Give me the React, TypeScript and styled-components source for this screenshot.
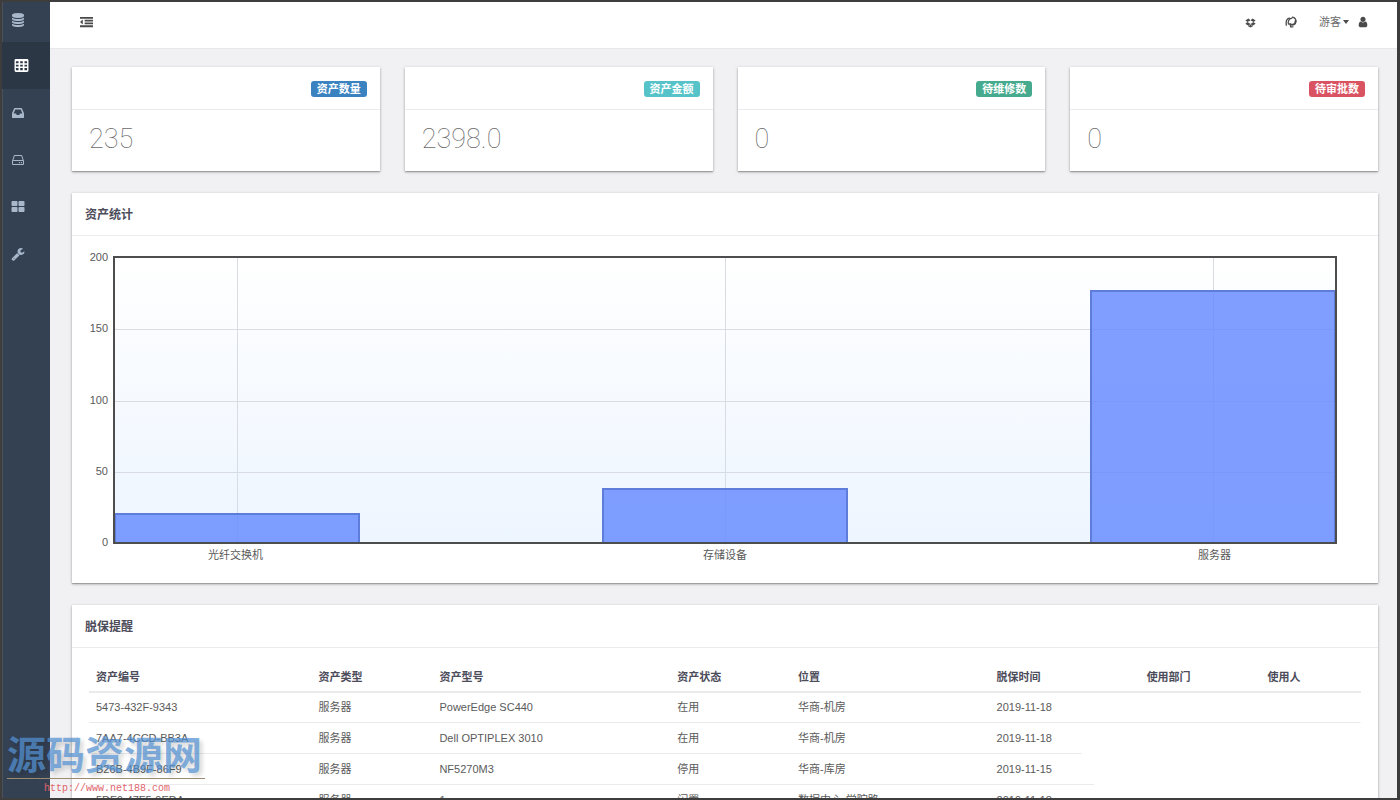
import React from 'react';
import styled, { createGlobalStyle } from 'styled-components';

const GlobalStyle = createGlobalStyle`
  *, *::before, *::after { box-sizing: border-box; }
  body {
    margin: 0;
    color: #5a5a5a;
    background: #f1f1f3;
    font: 11px/16px "Liberation Sans", "Noto Sans CJK SC", sans-serif;
  }
`;

const Frame = styled.div`
  position: relative;
  display: flex;
  height: 100vh;
  overflow: hidden;
  border: 2px solid #3d3d3d;
  border-right-width: 3px;
`;

const Sidebar = styled.nav`
  flex: none;
  width: 48px;
  background: #344153;
  box-shadow: inset 1px 0 #4b5157;
`;

const SideLink = styled.a<{ $active?: boolean; $logo?: boolean }>`
  display: flex;
  align-items: center;
  height: ${p => (p.$logo ? 40 : 47)}px;
  padding: 0 0 ${p => (p.$logo ? 4 : 0)}px ${p => (p.$active ? 12 : 9)}px;
  color: ${p => (p.$active ? '#ffffff' : '#a9b7cb')};
  background: ${p => (p.$active ? '#2b3744' : 'transparent')};
`;

const Glyph = styled.svg<{ $size: number }>`
  display: block;
  width: ${p => p.$size}px;
  height: ${p => p.$size}px;
  fill: currentColor;
`;

const Page = styled.div`
  flex: 1;
  min-width: 0;
`;

const TopBar = styled.header`
  display: flex;
  align-items: center;
  justify-content: space-between;
  height: 47px;
  padding: 0 28px 6px 30px;
  background: #fff;
  border-bottom: 1px solid #e7e8ea;
`;

const TopActions = styled.div<{ $gap: number }>`
  display: flex;
  align-items: center;
  gap: ${p => p.$gap}px;
`;

const PlainButton = styled.button`
  display: flex;
  align-items: center;
  padding: 0;
  border: 0;
  background: none;
  color: #4a4a4a;
  font: inherit;
`;

const UserButton = styled(PlainButton)`
  color: #6a6a6a;
  gap: 2px;
  svg { margin-left: 6px; color: #4a4a4a; }
`;

const Caret = styled.span`
  border: 3px solid transparent;
  border-top: 4px solid #4a4a4a;
  border-bottom: 0;
`;

const Content = styled.main`
  display: grid;
  gap: 22px;
  padding: 18px 19px 0 22px;
`;

const Stats = styled.div`
  display: grid;
  grid-template-columns: repeat(4, 1fr);
  gap: 25px;
`;

const Card = styled.section`
  min-width: 0;
  background: #fff;
  box-shadow: 0 1px 3px rgba(0, 0, 0, 0.28), 0 1px 1px rgba(0, 0, 0, 0.2);
`;

const CardHead = styled.div`
  display: flex;
  align-items: center;
  height: 43px;
  padding: 2px 13px 0;
  border-bottom: 1px solid #ebecee;
`;

const Badge = styled.span<{ $color: string }>`
  margin-left: auto;
  padding: 0 6px;
  border-radius: 3px;
  background: ${p => p.$color};
  color: #fff;
  font-weight: 700;
`;

const Figure = styled.p`
  margin: 0;
  padding: 13px 17px 16px;
  color: #6a6a6a;
  font: 100 27px/32px Roboto, sans-serif;
`;

const Title = styled.h2`
  margin: 0;
  color: #4c4c5a;
  font-size: 12px;
  font-weight: 700;
`;

const Chart = styled.div`
  display: grid;
  grid-template-columns: 23px 1fr;
  column-gap: 5px;
  padding: 13px 41px 20px 13px;
`;

const YAxis = styled.div`
  display: flex;
  flex-direction: column;
  justify-content: space-between;
  align-items: flex-end;
  height: 301px;
`;

const PlotColumn = styled.div`
  min-width: 0;
  padding-top: 7px;
`;

const Plot = styled.svg`
  display: block;
  width: 100%;
  height: 288px;
  border: 2px solid #4d4d4d;
  overflow: hidden;
`;

const XAxis = styled.div`
  display: flex;
  justify-content: space-between;
  padding-top: 3px;
  span { width: 20%; text-align: center; }
`;

const TableWrap = styled.div`
  padding: 13px 17px;
`;

const Table = styled.table`
  width: 100%;
  table-layout: fixed;
  border-collapse: collapse;
  th, td { height: 31px; text-align: left; white-space: nowrap; }
  th { padding: 2px 7px 0; color: #4c4c5a; font-weight: 700; }
  td { padding: 0 7px 2px; }
  thead tr { border-bottom: 2px solid #e9eaeb; }
`;

const Row = styled.tr<{ $rule: string }>`
  background: linear-gradient(#e9eaec, #e9eaec) left bottom / ${p => p.$rule} 1px no-repeat;
`;

const Watermark = styled.div`
  position: absolute;
  left: 5px;
  bottom: 0;
  width: 198px;
  pointer-events: none;
`;

const MarkName = styled.div`
  padding-bottom: 6px;
  border-bottom: 1px solid #9c8a72;
  color: rgba(84, 146, 212, 0.72);
  font: 700 39px/40px "Noto Sans CJK SC", sans-serif;
  text-shadow: 3px 3px 4px rgba(0, 0, 0, 0.16);
  white-space: nowrap;
`;

const MarkUrl = styled.div`
  padding: 1px 0 0 37px;
  color: #e0646c;
  font: 10px/18px "Liberation Mono", monospace;
`;

const icons = {
  database:
    'M896 768q237 0 443-43t325-127v170q0 69-103 128t-280 93.5-385 34.5-385-34.5-280-93.5-103-128v-170q119 84 325 127t443 43zm0 768q237 0 443-43t325-127v170q0 69-103 128t-280 93.5-385 34.5-385-34.5-280-93.5-103-128v-170q119 84 325 127t443 43zm0-384q237 0 443-43t325-127v170q0 69-103 128t-280 93.5-385 34.5-385-34.5-280-93.5-103-128v-170q119 84 325 127t443 43zm0-1152q208 0 385 34.5t280 93.5 103 128v128q0 69-103 128t-280 93.5-385 34.5-385-34.5-280-93.5-103-128v-128q0-69 103-128t280-93.5 385-34.5z',
  table:
    'M224 128h1344q160 0 160 160v1216q0 160-160 160h-1344q-160 0-160-160v-1216q0-160 160-160zM230 400v230h310v-230zM740 400v230h310v-230zM1250 400v230h310v-230zM230 800v230h310v-230zM740 800v230h310v-230zM1250 800v230h310v-230zM230 1200v260h310v-260zM740 1200v260h310v-260zM1250 1200v260h310v-260z',
  inbox:
    'M1151 960h316q-1-3-2.5-8t-2.5-8l-212-496h-708l-212 496q-1 2-2.5 8t-2.5 8h316l95 192h320zm513 30v482q0 26-19 45t-45 19h-1408q-26 0-45-19t-19-45v-482q0-62 25-123l238-552q10-25 36.5-42t52.5-17h832q26 0 52.5 17t36.5 42l238 552q25 61 25 123z',
  drive:
    'M1168 1216q0 33-23.5 56.5t-56.5 23.5-56.5-23.5-23.5-56.5 23.5-56.5 56.5-23.5 56.5 23.5 23.5 56.5zm256 0q0 33-23.5 56.5t-56.5 23.5-56.5-23.5-23.5-56.5 23.5-56.5 56.5-23.5 56.5 23.5 23.5 56.5zm112 160v-320q0-13-9.5-22.5t-22.5-9.5h-1216q-13 0-22.5 9.5t-9.5 22.5v320q0 13 9.5 22.5t22.5 9.5h1216q13 0 22.5-9.5t9.5-22.5zm-1230-480h1180l-157-482q-4-13-16-21.5t-26-8.5h-782q-14 0-26 8.5t-16 21.5zm1358 160v320q0 66-47 113t-113 47h-1216q-66 0-113-47t-47-113v-320q0-25 16-75l197-606q17-53 63-86t101-33h782q55 0 101 33t63 86l197 606q16 50 16 75z',
  blocks:
    'M832 1024v384q0 52-38 90t-90 38h-512q-52 0-90-38t-38-90v-384q0-52 38-90t90-38h512q52 0 90 38t38 90zm0-768v384q0 52-38 90t-90 38h-512q-52 0-90-38t-38-90v-384q0-52 38-90t90-38h512q52 0 90 38t38 90zm896 768v384q0 52-38 90t-90 38h-512q-52 0-90-38t-38-90v-384q0-52 38-90t90-38h512q52 0 90 38t38 90zm0-768v384q0 52-38 90t-90 38h-512q-52 0-90-38t-38-90v-384q0-52 38-90t90-38h512q52 0 90 38t38 90z',
  wrench:
    'M448 1472q0-26-19-45t-45-19-45 19-19 45 19 45 45 19 45-19 19-45zm644-420l-682 682q-37 37-90 37-52 0-91-37l-106-108q-38-36-38-90 0-53 38-91l681-681q39 98 114.5 173.5t173.5 114.5zm634-435q0 39-23 106-47 134-164.5 217.5t-258.5 83.5q-185 0-316.5-131.5t-131.5-316.5 131.5-316.5 316.5-131.5q58 0 121.5 16.5t107.5 46.5q16 11 16 28t-16 28l-293 169v224l193 107q5-3 79-48.5t135.5-81 70.5-35.5q15 0 23.5 10t8.5 25z',
  outdent:
    'M384 544v576q0 13-9.5 22.5t-22.5 9.5q-14 0-23-9l-288-288q-9-9-9-23t9-23l288-288q9-9 23-9 13 0 22.5 9.5t9.5 22.5zM0 1280h1792v256h-1792zM640 896h1152v256h-1152zM640 512h1152v256h-1152zM0 128h1792v256h-1792z',
  dropbox:
    'M402 829l494 305-342 285-490-320zm888 555v108l-394 236v2l-1-1-1 1v-2l-393-236v-108l118 77 275-228v-2l1 1 1-1v2l276 228zm-736-1145l342 285-494 305-338-270zm836 590l338 270-489 320-343-285zm-151-590l489 319-338 271-494-305z',
  user:
    'M1536 1399q0 109-62.5 187t-150.5 78h-854q-88 0-150.5-78t-62.5-187q0-85 8.5-160.5t31.5-152 58.5-131 94-89 134.5-34.5q131 128 313 128t313-128q76 0 134.5 34.5t94 89 58.5 131 31.5 152 8.5 160.5zm-256-887q0 159-112.5 271.5t-271.5 112.5-271.5-112.5-112.5-271.5 112.5-271.5 271.5-112.5 271.5 112.5 112.5 271.5z',
};

function Icon({ name, size }: { name: keyof typeof icons; size: number }) {
  return (
    <Glyph $size={size} viewBox="0 0 1792 1792" aria-hidden="true">
      <path fillRule="evenodd" d={icons[name]} />
    </Glyph>
  );
}

function SwirlIcon() {
  return (
    <Glyph $size={12} viewBox="0 0 12 12" aria-hidden="true">
      <g fill="none" stroke="currentColor" strokeLinecap="round">
        <path d="M4.6 2.2C2 2.6 0.7 5 1.3 9.2" strokeWidth="1.3" />
        <path d="M3.4 8.2C2.8 5 4 2.6 7 2.2" strokeWidth="1.2" />
        <path d="M7.4 1.2C10 1.8 11.2 3.6 10.8 6" strokeWidth="1.2" />
        <path d="M10.6 5C10.6 8.6 7.8 9.6 5 8" strokeWidth="2" />
        <path d="M5.2 8.4L5.6 10.8H8" strokeWidth="1.2" />
      </g>
    </Glyph>
  );
}

const stats = [
  { label: '资产数量', value: '235', color: '#3a83c0' },
  { label: '资产金额', value: '2398.0', color: '#55c3c8' },
  { label: '待维修数', value: '0', color: '#46ab8e' },
  { label: '待审批数', value: '0', color: '#d95362' },
];

const bars = [
  { label: '光纤交换机', value: 20 },
  { label: '存储设备', value: 38 },
  { label: '服务器', value: 177 },
];

const ticks = [200, 150, 100, 50, 0];
const PLOT_HEIGHT = 285;

const columns = [
  { name: '资产编号', width: '17.5%' },
  { name: '资产类型', width: '9.5%' },
  { name: '资产型号', width: '18.7%' },
  { name: '资产状态', width: '9.5%' },
  { name: '位置', width: '15.6%' },
  { name: '脱保时间', width: '11.8%' },
  { name: '使用部门', width: '9.5%' },
  { name: '使用人', width: '7.9%' },
];

const assets = [
  { rule: '100%', cells: ['5473-432F-9343', '服务器', 'PowerEdge SC440', '在用', '华商-机房', '2019-11-18', '', ''] },
  { rule: '78%', cells: ['7AA7-4CCD-BB3A', '服务器', 'Dell OPTIPLEX 3010', '在用', '华商-机房', '2019-11-18', '', ''] },
  { rule: '79%', cells: ['B26B-4B9F-86F9', '服务器', 'NF5270M3', '停用', '华商-库房', '2019-11-15', '', ''] },
  { rule: '100%', cells: ['5DF6-47F5-9EDA', '服务器', '1', '闲置', '数据中心-学院路', '2019-11-18', '', ''] },
];

function BarChart() {
  return (
    <Chart>
      <YAxis>
        {ticks.map(t => <span key={t}>{t}</span>)}
      </YAxis>
      <PlotColumn>
        <Plot role="img" aria-label="资产统计">
          <defs>
            <linearGradient id="plotFill" x1="0" y1="0" x2="0" y2="1">
              <stop offset="0" stopColor="#ffffff" />
              <stop offset="1" stopColor="#edf5ff" />
            </linearGradient>
          </defs>
          <rect width="100%" height="100%" fill="url(#plotFill)" />
          {ticks.slice(1, -1).map(t => {
            const y = Math.round(PLOT_HEIGHT * (1 - t / 200));
            return <rect key={t} y={y} width="100%" height="1" fill="#d9dce2" />;
          })}
          {bars.map((b, i) => (
            <rect key={b.label} x={`${10 + i * 40}%`} width="1" height="100%" fill="#d9dce2" />
          ))}
          {bars.map((b, i) => {
            const h = Math.round((PLOT_HEIGHT * b.value) / 200);
            return (
              <rect key={b.label} x={`${i * 40}%`} y={PLOT_HEIGHT - h} width="20%" height={h + 4}
                fill="#6489ff" fillOpacity="0.82" stroke="#5e7ddb" strokeWidth="2" />
            );
          })}
        </Plot>
        <XAxis>
          {bars.map(b => <span key={b.label}>{b.label}</span>)}
        </XAxis>
      </PlotColumn>
    </Chart>
  );
}

export default function App() {
  return (
    <>
      <GlobalStyle />
      <Frame>
        <Sidebar>
          <SideLink href="#home" $logo aria-label="首页"><Icon name="database" size={14} /></SideLink>
          <SideLink href="#dashboard" $active aria-label="仪表盘"><Icon name="table" size={15} /></SideLink>
          <SideLink href="#inbox" aria-label="入库"><Icon name="inbox" size={14} /></SideLink>
          <SideLink href="#assets" aria-label="资产"><Icon name="drive" size={14} /></SideLink>
          <SideLink href="#category" aria-label="分类"><Icon name="blocks" size={14} /></SideLink>
          <SideLink href="#repair" aria-label="维修"><Icon name="wrench" size={14} /></SideLink>
        </Sidebar>
        <Page>
          <TopBar>
            <PlainButton type="button" aria-label="菜单"><Icon name="outdent" size={13} /></PlainButton>
            <TopActions $gap={22}>
              <TopActions $gap={29}>
                <PlainButton type="button" aria-label="存储"><Icon name="dropbox" size={11} /></PlainButton>
                <PlainButton type="button" aria-label="动态"><SwirlIcon /></PlainButton>
              </TopActions>
              <UserButton type="button">
                游客
                <Caret />
                <Icon name="user" size={12} />
              </UserButton>
            </TopActions>
          </TopBar>
          <Content>
            <Stats>
              {stats.map(s => (
                <Card key={s.label}>
                  <CardHead><Badge $color={s.color}>{s.label}</Badge></CardHead>
                  <Figure>{s.value}</Figure>
                </Card>
              ))}
            </Stats>
            <Card>
              <CardHead><Title>资产统计</Title></CardHead>
              <BarChart />
            </Card>
            <Card>
              <CardHead><Title>脱保提醒</Title></CardHead>
              <TableWrap>
                <Table>
                  <colgroup>
                    {columns.map(c => <col key={c.name} style={{ width: c.width }} />)}
                  </colgroup>
                  <thead>
                    <tr>{columns.map(c => <th key={c.name} scope="col">{c.name}</th>)}</tr>
                  </thead>
                  <tbody>
                    {assets.map(a => (
                      <Row key={a.cells[0]} $rule={a.rule}>
                        {a.cells.map((cell, i) => <td key={columns[i].name}>{cell}</td>)}
                      </Row>
                    ))}
                  </tbody>
                </Table>
              </TableWrap>
            </Card>
          </Content>
        </Page>
        <Watermark>
          <MarkName>源码资源网</MarkName>
          <MarkUrl>http://www.net188.com</MarkUrl>
        </Watermark>
      </Frame>
    </>
  );
}
